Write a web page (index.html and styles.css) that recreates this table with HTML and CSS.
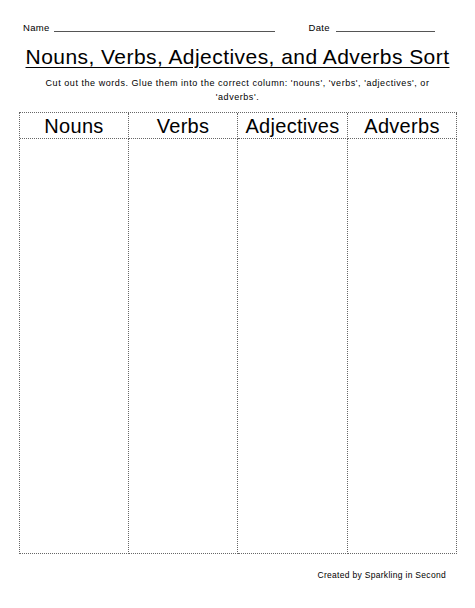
FILE: index.html
```html
<!DOCTYPE html>
<html>
<head>
<meta charset="utf-8">
<link rel="stylesheet" href="styles.css">
</head>
<body>
<div class="page">
  <div class="name-row">
    <span class="label">Name</span>
    <span class="blank blank-name"></span>
    <span class="label label-date">Date</span>
    <span class="blank blank-date"></span>
  </div>
  <h1 class="title">Nouns, Verbs, Adjectives, and Adverbs Sort</h1>
  <p class="instructions">Cut out the words. Glue them into the correct column: 'nouns', 'verbs', 'adjectives', or 'adverbs'.</p>
  <div class="sort-table">
    <div class="head">Nouns</div>
    <div class="head">Verbs</div>
    <div class="head">Adjectives</div>
    <div class="head last">Adverbs</div>
    <div class="cell"></div>
    <div class="cell"></div>
    <div class="cell"></div>
    <div class="cell last"></div>
  </div>
  <div class="credit">Created by Sparkling in Second</div>
</div>
</body>
</html>
```
FILE: styles.css
```css
html, body {
  margin: 0;
  padding: 0;
  background: #fff;
}
.page {
  width: 475px;
  height: 608px;
  font-family: "Liberation Sans", Arial, sans-serif;
  color: #000;
}
.name-row {
  display: flex;
  align-items: flex-end;
  padding: 21px 0 0 23px;
  height: 12px;
  font-size: 9.5px;
  letter-spacing: 0.3px;
}
.label {
  line-height: 11px;
}
.blank {
  display: block;
  border-bottom: 1px solid #555;
  height: 10px;
  margin-bottom: 1px;
}
.blank-name {
  width: 221px;
  margin-left: 4px;
}
.label-date {
  margin-left: 34px;
}
.blank-date {
  width: 99px;
  margin-left: 6px;
}
.title {
  margin: 12px 0 0 0;
  text-align: center;
  font-size: 21px;
  font-weight: normal;
  letter-spacing: 0.45px;
  line-height: 24px;
  text-decoration: underline;
  text-decoration-thickness: 1px;
  text-underline-offset: 3px;
}
.instructions {
  margin: 7px auto 0;
  width: 392px;
  text-align: center;
  font-size: 9px;
  letter-spacing: 0.55px;
  line-height: 14px;
}
.sort-table {
  display: grid;
  grid-template-columns: 109px 109px 110px 109px;
  grid-template-rows: 26px 415px;
  margin: 8px 0 0 19px;
  width: 437px;
  border-top: 1px dotted #666;
  border-left: 1px dotted #666;
}
.head, .cell {
  border-right: 1px dotted #666;
  border-bottom: 1px dotted #666;
}
.head {
  font-size: 20px;
  text-align: center;
  line-height: 26px;
  letter-spacing: 0.3px;
}
.credit {
  margin: 16px 29px 0 0;
  text-align: right;
  font-size: 8.5px;
  letter-spacing: 0.3px;
}
```
